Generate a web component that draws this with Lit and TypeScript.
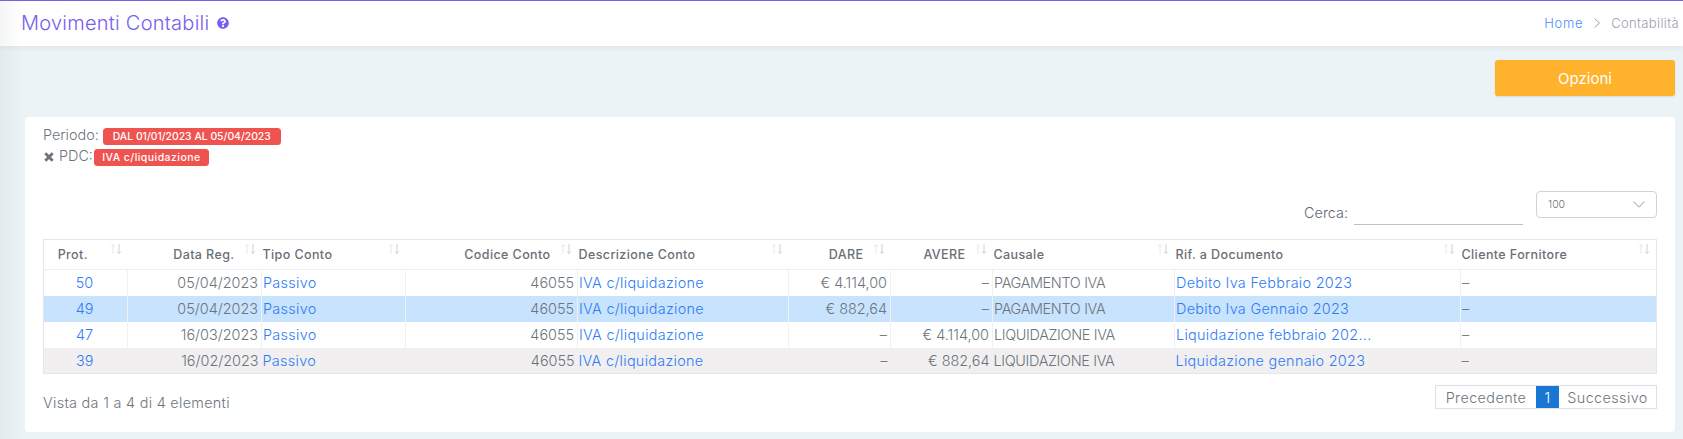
import { LitElement, html, css, svg } from "lit";
import { customElement } from "lit/decorators.js";

const rows = [
  ["50", "05/04/2023", "Passivo", "46055", "IVA c/liquidazione", "€ 4.114,00", "–", "PAGAMENTO IVA", "Debito Iva Febbraio 2023", "–"],
  ["49", "05/04/2023", "Passivo", "46055", "IVA c/liquidazione", "€ 882,64", "–", "PAGAMENTO IVA", "Debito Iva Gennaio 2023", "–"],
  ["47", "16/03/2023", "Passivo", "46055", "IVA c/liquidazione", "–", "€ 4.114,00", "LIQUIDAZIONE IVA", "Liquidazione febbraio 202...", "–"],
  ["39", "16/02/2023", "Passivo", "46055", "IVA c/liquidazione", "–", "€ 882,64", "LIQUIDAZIONE IVA", "Liquidazione gennaio 2023", "–"],
];
const heads: [string, string][] = [
  ["Prot.", "c"], ["Data Reg.", "r"], ["Tipo Conto", "l"], ["Codice Conto", "r"], ["Descrizione Conto", "l"],
  ["DARE", "r"], ["AVERE", "r"], ["Causale", "l"], ["Rif. a Documento", "l"], ["Cliente Fornitore", "l"],
];
const aligns = ["c", "r", "l", "r", "l", "r", "r", "l", "l", "l"];
const links = [0, 2, 4, 8];
const widths = [84, 134, 144, 172, 211, 102, 102, 182, 286, 196];

const sortIcon = svg`<svg class="sort" width="12" height="12" viewBox="0 0 12 12" fill="none" stroke-width="1">
  <path d="M3 11V1.5M1 3.5l2-2 2 2" stroke="#e6e8ea"/><path d="M9 1v9.5M7 8.5l2 2 2-2" stroke="#cdd0d4"/></svg>`;

@customElement("app-root")
export class AppRoot extends LitElement {
  static styles = css`
    :host { display: block; position: relative; height: 439px; overflow: hidden; background: #ecf3f6;
      font-family: Inter, "Noto Sans", sans-serif; color: #6c757d; }
    .edge { position: absolute; left: 0; top: 0; bottom: 0; width: 22px; pointer-events: none;
      background: linear-gradient(to right, rgba(120,130,140,.08), rgba(120,130,140,0)); }
    header { height: 46px; box-sizing: border-box; border-top: 1px solid #7460ee; background: #fff;
      box-shadow: 0 1px 6px rgba(120,130,140,.14); display: flex; align-items: center; justify-content: space-between;
      padding: 0 4px 2px 21px; }
    .title { display: flex; align-items: center; gap: 8px; }
    h1 { margin: 0; font-size: 20px; font-weight: 300; color: #7460ee; letter-spacing: .25px; }
    .crumb { display: flex; align-items: center; gap: 11px; font-size: 13px; font-weight: 300; color: #9aa0a9; letter-spacing: .35px; padding-top: 1px; }
    .crumb .home { color: #4c8dff; letter-spacing: .7px; }
    .actions { display: flex; justify-content: flex-end; padding: 14px 8px 21px 0; }
    .btn { width: 180px; height: 36px; display: flex; align-items: center; justify-content: center; background: #ffb22b;
      color: #fff; border-radius: 3px; font-size: 15px; font-weight: 400; box-shadow: 0 1px 2px rgba(0,0,0,.1); }
    .card { margin: 0 8px 0 25px; height: 315px; box-sizing: border-box; background: #fff; border-radius: 4px; padding: 9px 18px 0 18px; }
    .filter { display: flex; align-items: center; height: 21px; font-size: 14.4px; font-weight: 300; color: #6c757d; }
    .lbl { margin-top: -4px; }
    .badge { display: inline-flex; align-items: center; justify-content: center; height: 17px; box-sizing: border-box; background: #ef5350;
      color: #fff; border-radius: 3.5px; font-weight: 500; }
    .b1 { width: 178px; margin-left: 4px; font-size: 10.4px; }
    .b2 { width: 115px; margin-left: 1px; font-size: 10.5px; letter-spacing: .45px; }
    .x { margin: -2px 5px 0 1px; }
    .tools { display: flex; justify-content: flex-end; align-items: flex-start; margin-top: 23px; height: 48px; }
    .search { display: flex; align-items: center; margin-top: 7px; }
    .search label { font-size: 14.4px; font-weight: 300; color: #5f6872; margin-right: 6px; padding-top: 2px; }
    .input { width: 169px; height: 26px; border-bottom: 1px solid #bcc1c9; margin-right: 13px; }
    .select { width: 121px; height: 27px; box-sizing: border-box; border: 1px solid #d0d3da; border-radius: 4px; display: flex;
      align-items: center; justify-content: space-between; padding: 0 11px; font-size: 10.5px; color: #6c757d; font-weight: 300; }
    table { border-collapse: collapse; table-layout: fixed; width: 1613px; border: 1px solid #e4e6e9; }
    th { position: relative; height: 30px; box-sizing: border-box; font-size: 12.5px; font-weight: 500; color: #6a6f76; padding: 0 1px;
      letter-spacing: .4px; border-bottom: 1px solid #eceef0; white-space: nowrap; }
    th.r { padding-right: 27px; }
    th.c { padding-right: 27px; }
    td { height: 26px; box-sizing: border-box; padding: 0 3px 0 1px; font-size: 14.4px; font-weight: 300; color: #6c757d; white-space: nowrap;
      border-right: 1px solid #f0f1f3; overflow: hidden; }
    td:last-child { border-right: 0; }
    td.caps { letter-spacing: -.33px; }
    .c { text-align: center; } .r { text-align: right; } .l { text-align: left; }
    a { color: #2f7cf6; text-decoration: none; letter-spacing: .3px; }
    td.c a { letter-spacing: 0; }
    tr.sel td { background: #c8e3fd; }
    tr.alt td { background: #f1eff0; border-right: 0; }
    .sort { position: absolute; top: 0; right: 6px; margin-top: 3px; }
    .foot { display: flex; justify-content: space-between; margin-top: 11px; }
    .info { font-size: 14.4px; font-weight: 300; color: #6c757d; padding-top: 9px; letter-spacing: .3px; }
    .pages { display: flex; height: 24px; box-sizing: border-box; border: 1px solid #dee0e3; font-size: 14.4px; font-weight: 300; color: #6c757d; letter-spacing: .4px; }
    .pages span { display: flex; align-items: center; justify-content: center; }
    .p { width: 100px; } .n { width: 97px; }
    .cur { width: 23px; background: #1976d2; color: #fff; }
  `;

  render() {
    return html`
      <header>
        <div class="title">
          <h1>Movimenti Contabili</h1>
          <svg width="12" height="12" viewBox="0 0 512 512" fill="#7460ee"><path d="M504 256c0 136.997-111.043 248-248 248S8 392.997 8 256C8 119.083 119.043 8 256 8s248 111.083 248 248zM262.655 90c-54.497 0-89.255 22.957-116.549 63.758-3.536 5.286-2.353 12.415 2.715 16.258l34.699 26.31c5.205 3.947 12.621 3.008 16.665-2.122 17.864-22.658 30.113-35.797 57.303-35.797 20.429 0 45.698 13.148 45.698 32.958 0 14.976-12.363 22.667-32.534 33.976C247.128 238.528 216 254.941 216 296v4c0 6.627 5.373 12 12 12h56c6.627 0 12-5.373 12-12v-1.333c0-28.462 83.186-29.647 83.186-106.667 0-58.002-60.165-102-116.531-102zM256 338c-26.467 0-48 21.533-48 48s21.533 48 48 48 48-21.533 48-48-21.533-48-48-48z"/></svg>
        </div>
        <div class="crumb">
          <span class="home">Home</span>
          <svg width="6" height="10" viewBox="0 0 6 10" fill="none" stroke="#9aa0a9"><path d="M.5.5 5.5 5 .5 9.5"/></svg>
          <span>Contabilità</span>
        </div>
      </header>
      <div class="actions"><div class="btn">Opzioni</div></div>
      <section class="card">
        <div class="filter"><span class="lbl">Periodo:</span><span class="badge b1">DAL 01/01/2023 AL 05/04/2023</span></div>
        <div class="filter">
          <svg class="x" width="10" height="10" viewBox="0 0 10 10" stroke="#6c757d" stroke-width="2.8"><path d="M1.3 1.3l7.4 7.4M8.7 1.3 1.3 8.7"/></svg>
          <span class="lbl">PDC:</span><span class="badge b2">IVA c/liquidazione</span>
        </div>
        <div class="tools">
          <div class="search"><label>Cerca:</label><div class="input"></div></div>
          <div class="select"><span>100</span>
            <svg width="12" height="7" viewBox="0 0 12 7" fill="none" stroke="#b9bdc5" stroke-width="1.1"><path d="M.5.5 6 6 11.5.5"/></svg>
          </div>
        </div>
        <table>
          <colgroup>${widths.map((w) => html`<col style="width:${w}px" />`)}</colgroup>
          <thead><tr>${heads.map(([t, a]) => html`<th class=${a}>${t}${sortIcon}</th>`)}</tr></thead>
          <tbody>
            ${rows.map((r, i) => html`<tr class=${i === 1 ? "sel" : i === 3 ? "alt" : ""}>
              ${r.map((c, j) => html`<td class="${aligns[j]} ${j === 7 ? "caps" : ""}">${links.includes(j) ? html`<a>${c}</a>` : c}</td>`)}
            </tr>`)}
          </tbody>
        </table>
        <div class="foot">
          <div class="info">Vista da 1 a 4 di 4 elementi</div>
          <div class="pages"><span class="p">Precedente</span><span class="cur">1</span><span class="n">Successivo</span></div>
        </div>
      </section>
      <div class="edge"></div>
    `;
  }
}
